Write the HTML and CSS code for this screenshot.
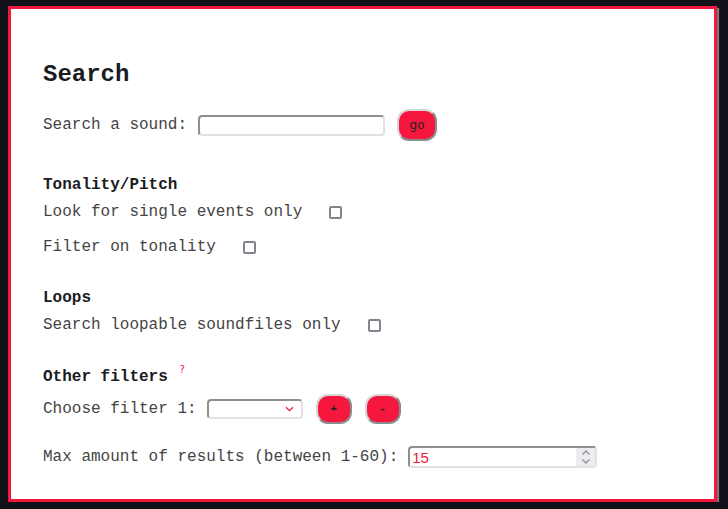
FILE: index.html
```html
<!DOCTYPE html>
<html lang="en">
<head>
  <meta charset="UTF-8">
  <meta name="viewport" content="width=device-width, initial-scale=1.0">
  <title>Search</title>
  <link rel="stylesheet" href="styles.css">
</head>
<body>
  <div class="panel">
    <h2>Search</h2>

    <div class="row">
      <label for="query">Search a sound:</label>
      <input type="text" id="query" class="text-input query-input">
      <button class="red-btn go-btn">go</button>
    </div>

    <div class="section tonality">
      <h3>Tonality/Pitch</h3>
      <div class="row line">
        <label for="single">Look for single events only</label>
        <input type="checkbox" id="single" class="check">
      </div>
      <div class="row line">
        <label for="tonality">Filter on tonality</label>
        <input type="checkbox" id="tonality" class="check">
      </div>
    </div>

    <div class="section">
      <h3>Loops</h3>
      <div class="row line">
        <label for="loopable">Search loopable soundfiles only</label>
        <input type="checkbox" id="loopable" class="check">
      </div>
    </div>

    <div class="section filters">
      <h3>Other filters <sup class="help">?</sup></h3>
      <div class="row">
        <label for="filter1">Choose filter 1:</label>
        <div class="select-box">
          <select id="filter1"></select>
          <svg class="chevron" width="9" height="6" viewBox="0 0 9 6"><path d="M1 1.2 L4.5 4.6 L8 1.2" fill="none" stroke="#f2183d" stroke-width="1.3"/></svg>
        </div>
        <button class="red-btn small-btn">+</button>
        <button class="red-btn small-btn">-</button>
      </div>
      <div class="row max-row">
        <label for="amount">Max amount of results (between 1-60):</label>
        <div class="number-box">
          <input type="text" id="amount" value="15">
          <span class="spinner">
            <svg width="10" height="16" viewBox="0 0 10 16"><path d="M1.5 5.5 L5 2 L8.5 5.5 M1.5 10.5 L5 14 L8.5 10.5" fill="none" stroke="#8d8d95" stroke-width="1.3"/></svg>
          </span>
        </div>
      </div>
    </div>
  </div>
</body>
</html>
```

FILE: styles.css
```css
/* page */
body {
  margin: 0;
  padding: 6px 11px 0 8px;
  background-color: #0f1018;
  font-family: "Liberation Mono", "Courier New", monospace;
  font-size: 16px;
  color: #444;
}

.panel {
  box-sizing: border-box;
  height: 496px;
  background: #fff;
  border: 3px solid #f2183d;
  box-shadow: 2px 2px 1px #77777c;
  padding: 32px;
}

h2 {
  margin: 20px 0 21px 0;
  font-size: 24px;
  color: #1b1b22;
}

h3 {
  margin: 0 0 9px 0;
  font-size: 16px;
  line-height: 18px;
  color: #1b1b22;
}

.row {
  display: flex;
  align-items: center;
}

.line {
  height: 18px;
}

.line + .line {
  margin-top: 17px;
}

.section {
  margin-top: 33px;
}

.tonality {
  margin-top: 35px;
}

.filters {
  margin-top: 34px;
}

.filters h3 {
  margin-bottom: 8px;
}

.max-row {
  margin-top: 22px;
}

/* inputs */
.text-input,
.select-box,
.number-box {
  border: 2px solid;
  border-color: #8f8f8f #e2e2e2 #e2e2e2 #8f8f8f;
  border-radius: 4px;
  box-sizing: border-box;
  background: #fff;
}

.query-input {
  width: 187px;
  height: 21px;
  margin-left: 11px;
}

.check {
  appearance: none;
  width: 13px;
  height: 13px;
  margin: 0 0 0 27px;
  border: 2px solid #85838f;
  border-radius: 2px;
  box-sizing: border-box;
}

.select-box {
  display: flex;
  align-items: center;
  justify-content: flex-end;
  width: 96px;
  height: 20px;
  margin-left: 10px;
  padding-right: 7px;
}

.select-box select {
  display: none;
}

.number-box {
  display: flex;
  align-items: center;
  width: 189px;
  height: 22px;
  margin-left: 10px;
}

.number-box input {
  flex: 1;
  min-width: 0;
  border: none;
  outline: none;
  padding: 0 0 0 2px;
  font-family: "Liberation Sans", Arial, sans-serif;
  font-size: 15px;
  color: #f2183d;
}

.spinner {
  display: flex;
  align-items: center;
  justify-content: center;
  width: 19px;
  height: 18px;
  background: #ececee;
  border-radius: 2px;
}

/* buttons */
.red-btn {
  background-color: #f5173e;
  border: 2px solid;
  border-color: #d6d6d6 #8b8b8b #8b8b8b #d6d6d6;
  border-radius: 12px;
  color: #222;
  cursor: pointer;
  padding: 0;
}

.go-btn {
  width: 40px;
  height: 32px;
  margin-left: 12px;
  font-family: "DejaVu Sans", sans-serif;
  font-size: 12px;
}

.small-btn {
  width: 36px;
  height: 30px;
  margin-left: 13px;
  font-family: "Liberation Mono", monospace;
  font-size: 11px;
  font-weight: bold;
}

.help {
  color: #f2183d;
  font-family: "DejaVu Sans", sans-serif;
  font-size: 10px;
  font-weight: normal;
  line-height: 0;
  margin-left: 2px;
  vertical-align: 8px;
}
```
